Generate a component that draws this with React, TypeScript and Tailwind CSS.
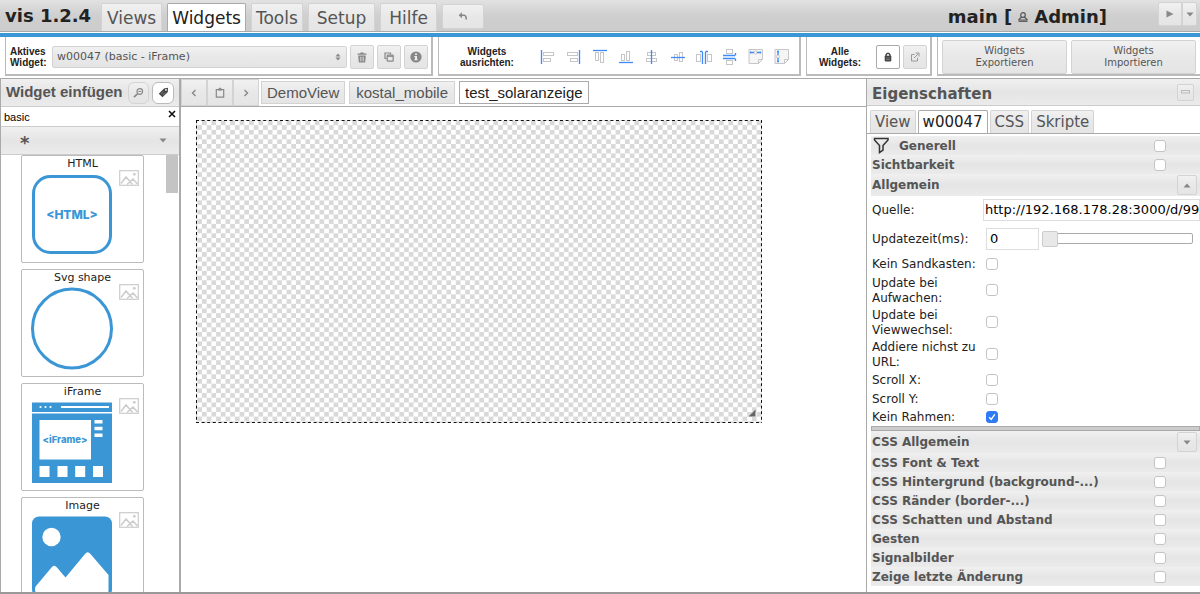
import type { ReactNode } from "react";

const glass =
  "border border-[#d3d3d3] bg-linear-to-b from-[#f1f1f1] via-[#e8e8e8] to-[#e5e5e5] text-[#555]";
const bar = "bg-linear-to-b from-[#f0f0f0] via-[#e5e5e5] to-[#ebebeb]";

function IconButton({
  label,
  className,
  children,
}: {
  label: string;
  className: string;
  children: ReactNode;
}) {
  return (
    <button
      type="button"
      aria-label={label}
      className={`flex shrink-0 items-center justify-center ${className}`}
    >
      {children}
    </button>
  );
}

function Caret({ up = false }: { up?: boolean }) {
  return (
    <svg width="8" height="5" viewBox="0 0 8 5" fill="#888">
      <path d={up ? "M0.5 4.5 L4 0.5 L7.5 4.5Z" : "M0.5 0.5 L4 4.5 L7.5 0.5Z"} />
    </svg>
  );
}

function Check({ id, checked = false }: { id: string; checked?: boolean }) {
  return (
    <span className="grid size-3 shrink-0 place-items-center">
      <input
        id={id}
        type="checkbox"
        defaultChecked={checked}
        className="peer col-start-1 row-start-1 size-3 appearance-none rounded-[3px] border border-[#c4c4c4] bg-white checked:border-[#2f7bf6] checked:bg-[#2f7bf6]"
      />
      <svg
        width="10"
        height="10"
        viewBox="0 0 10 10"
        className="pointer-events-none invisible col-start-1 row-start-1 peer-checked:visible"
        fill="none"
        stroke="#fff"
        strokeWidth="1.4"
      >
        <path d="M2.2 5.3 L4.2 7.5 L7.8 2.3" />
      </svg>
    </span>
  );
}

/* ---------- header ---------- */

function Header() {
  const tab = "rounded-t-xs border-b-0 pt-0.5 text-[17px] leading-[25px]";
  return (
    <header className="flex h-8 items-end border-b border-[#aaa] bg-linear-to-b from-[#e2e2e2] via-[#cfcfcf] to-[#cccccc] pl-[5px] pr-[3px]">
      <h1 className="w-24 self-center text-[18px] leading-8 font-bold text-[#222]">vis 1.2.4</h1>
      <nav className="flex items-end gap-[5px]">
        <a href="#views" className={`${tab} px-[5px] ${glass}`}>
          Views
        </a>
        <a
          href="#widgets"
          className={`${tab} border border-[#aaa] bg-white px-1 text-[#212121]`}
        >
          Widgets
        </a>
        <a href="#tools" className={`${tab} px-1 ${glass}`}>
          Tools
        </a>
        <button type="button" className={`${tab} px-2 ${glass}`}>
          Setup
        </button>
        <button type="button" className={`${tab} px-2 ${glass}`}>
          Hilfe
        </button>
        <IconButton label="Undo" className={`mb-0.5 h-[25px] w-[42px] rounded-xs ${glass}`}>
          <svg width="10" height="9" viewBox="0 0 10 9" fill="none" stroke="#888" strokeWidth="1.6">
            <path d="M2 3.3 H6.2 Q8.3 3.5 8.2 7.5" />
            <path d="M4 0.3 L0.6 3.3 L4 6.3Z" fill="#888" stroke="none" />
          </svg>
        </IconButton>
      </nav>
      <div className="ml-auto flex items-center self-center pt-0.5 text-[18px] leading-8 font-bold text-[#222]">
        <span>main [</span>
        <svg width="10" height="10" viewBox="0 0 10 10" className="mx-1.5" fill="none" stroke="#555" strokeWidth="1.2">
          <circle cx="5" cy="3" r="2.3" />
          <path d="M3.8 5 L1 7.2 V8 H9 V7.2 L6.2 5" />
          <path d="M0.5 9.3 H9.5" />
        </svg>
        <span>Admin]</span>
      </div>
      <div className="ml-[51px] flex self-start pt-0.5">
        <IconButton label="Run view" className={`h-6 w-6 rounded-l-xs ${glass}`}>
          <svg width="8" height="8" viewBox="0 0 8 8" fill="#888">
            <path d="M0.5 0.5 L7.5 4 L0.5 7.5Z" />
          </svg>
        </IconButton>
        <IconButton label="Run options" className={`h-6 w-[15px] rounded-r-xs ${glass}`}>
          <Caret />
        </IconButton>
      </div>
    </header>
  );
}

/* ---------- toolbar ---------- */

const alignIcons: { label: string; lines: string; boxes: ReactNode }[] = [
  {
    label: "Align left",
    lines: "M2.5 2 V16",
    boxes: (<><rect x="4.5" y="4.5" width="10" height="3" /><rect x="4.5" y="10.5" width="7" height="3" /></>),
  },
  {
    label: "Align right",
    lines: "M14.5 2 V16",
    boxes: (<><rect x="2.5" y="4.5" width="10" height="3" /><rect x="5.5" y="10.5" width="7" height="3" /></>),
  },
  {
    label: "Align top",
    lines: "M2 2.5 H16",
    boxes: (<><rect x="4.5" y="4.5" width="3" height="8" /><rect x="9.5" y="4.5" width="3" height="10" /></>),
  },
  {
    label: "Align bottom",
    lines: "M2 14.5 H16",
    boxes: (<><rect x="4.5" y="6.5" width="3" height="6" /><rect x="9.5" y="3.5" width="3" height="9" /></>),
  },
  {
    label: "Centre horizontally",
    lines: "M8.5 2 V16",
    boxes: (<><rect x="4.5" y="4.5" width="8" height="3" /><rect x="3.5" y="10.5" width="10" height="3" /></>),
  },
  {
    label: "Centre vertically",
    lines: "M2 9.5 H16",
    boxes: (<><rect x="5.5" y="6.5" width="3" height="6" /><rect x="10.5" y="4.5" width="3" height="9" /></>),
  },
  {
    label: "Distribute horizontally",
    lines: "M7.5 4 V16 M10.5 4 V16 M5 3.5 H7.5 M10.5 3.5 H13",
    boxes: (<><rect x="1.5" y="6.5" width="4" height="7" /><rect x="12.5" y="6.5" width="4" height="7" /></>),
  },
  {
    label: "Distribute vertically",
    lines: "M2 7.5 H14 M2 10.5 H14 M14.5 5 V7.5 M14.5 10.5 V13",
    boxes: (<><rect x="5.5" y="1.5" width="6" height="4" /><rect x="5.5" y="12.5" width="6" height="4" /></>),
  },
  {
    label: "Same width",
    lines: "M3 4.5 H7 M10 4.5 H14 M3.500 3.500 V5.500 M13.500 3.500 V5.500",
    boxes: (<><path d="M2 1.5 H15.5 V11.5 L11.5 15.5 H2Z M11.5 15.5 V11.5 H15.5" fill="#f5f5f5" /><circle cx="8.5" cy="4.5" r="1.5" /></>),
  },
  {
    label: "Same height",
    lines: "M5 3 V7 M5 10 V14 M4 3.500 H6 M4 13.500 H6",
    boxes: (<><path d="M2 1.5 H15.5 V11.5 L11.5 15.5 H2Z M11.5 15.5 V11.5 H15.5" fill="#f5f5f5" /><circle cx="5" cy="8.5" r="1.5" /></>),
  },
];

const group = "flex h-[39px] items-center border-r-2 border-b-2 border-l border-[#bbb] bg-white pt-[3px]";

function Toolbar() {
  return (
    <div className="flex h-[42px] items-start gap-[5px] border-b border-[#aaa] pl-[5px]">
      <section className={`${group} shrink-0 gap-[3px] pr-[3px] pl-1`}>
        <label
          htmlFor="active-widget"
          className="w-[39px] font-['Liberation_Sans',Arial,sans-serif] text-[10px] leading-[11px] font-bold text-[#222]"
        >
          Aktives Widget:
        </label>
        <span className="relative">
          <select
            id="active-widget"
            className={`block h-[22px] w-[295px] appearance-none rounded-xs pl-1 text-[11px] ${glass}`}
          >
            <option>w00047 (basic - iFrame)</option>
          </select>
          <svg width="6" height="8" viewBox="0 0 6 8" className="pointer-events-none absolute top-[7px] right-[6px]" fill="#888">
            <path d="M0.5 3.4 L3 0.5 L5.5 3.4Z M0.5 4.6 L3 7.5 L5.5 4.6Z" />
          </svg>
        </span>
        <IconButton label="Delete widget" className={`size-6 rounded-xs ${glass}`}>
          <svg width="10" height="11" viewBox="0 0 10 11" fill="#888">
            <path d="M0.5 1.5 H3.3 V0.5 H6.7 V1.5 H9.5 V2.8 H0.5Z" />
            <path fillRule="evenodd" d="M1.2 3.5 H8.8 L8.2 10.5 H1.8Z M3 4.8 V9.3 H3.6 V4.8Z M4.7 4.8 V9.3 H5.3 V4.8Z M6.4 4.8 V9.3 H7 V4.8Z" />
          </svg>
        </IconButton>
        <IconButton label="Copy widget" className={`size-6 rounded-xs ${glass}`}>
          <svg width="10" height="10" viewBox="0 0 10 10" fill="none" stroke="#888" strokeWidth="1.2">
            <path d="M2.5 6.5 H1 V1 H6.5 V2.5" />
            <rect x="3.2" y="3.2" width="6" height="6" rx="0.8" />
            <path d="M3.5 4.3 H9" />
          </svg>
        </IconButton>
        <IconButton label="Widget info" className={`size-6 rounded-xs ${glass}`}>
          <svg width="12" height="12" viewBox="0 0 12 12">
            <circle cx="6" cy="6" r="5.6" fill="#888" />
            <path d="M5 2.4 H7 V4.1 H5Z M4.3 5 H7 V8.3 H7.7 V9.3 H4.3 V8.3 H5 V6 H4.3Z" fill="#eee" />
          </svg>
        </IconButton>
      </section>

      <section className={`${group} shrink-0 pr-1`}>
        <p className="w-[96px] text-center font-['Liberation_Sans',Arial,sans-serif] text-[10px] leading-[11px] font-bold text-[#222]">
          Widgets
          <br />
          ausrichten:
        </p>
        {alignIcons.map((icon) => (
          <IconButton key={icon.label} label={icon.label} className="h-6 w-[26px]">
            <svg width="18" height="18" viewBox="0 0 18 18" fill="none" strokeWidth="1">
              <g stroke="#c6c6c6">{icon.boxes}</g>
              <path d={icon.lines} stroke="#3d8bfa" strokeWidth="1.3" />
            </svg>
          </IconButton>
        ))}
      </section>

      <section className={`${group} shrink-0 gap-[3px] pr-[3px]`}>
        <p className="w-[66px] text-center font-['Liberation_Sans',Arial,sans-serif] text-[10px] leading-[11px] font-bold text-[#222]">
          Alle
          <br />
          Widgets:
        </p>
        <IconButton label="Lock all widgets" className="size-6 rounded-xs border border-[#aaa] bg-white">
          <svg width="8" height="10" viewBox="0 0 8 10">
            <path d="M2 4.5 V2.8 Q4 -0.4 6 2.8 V4.5" fill="none" stroke="#444" strokeWidth="1.5" />
            <rect x="0.7" y="3.8" width="6.6" height="5.6" rx="0.8" fill="#444" />
            <path d="M2 6 H6 M2 7.6 H6" stroke="#999" strokeWidth="0.6" />
          </svg>
        </IconButton>
        <IconButton label="Open all widgets" className={`size-6 rounded-xs ${glass}`}>
          <svg width="10" height="10" viewBox="0 0 10 10" fill="none" stroke="#999" strokeWidth="1">
            <path d="M4.5 2.5 H1.5 V9 H7.5 V5.8" />
            <path d="M4 6 L8 2 M5.5 1 H9 V4.5" />
          </svg>
        </IconButton>
      </section>

      <section className="flex h-[39px] min-w-0 flex-1 items-center gap-1 border-b-2 border-l border-[#bbb] bg-white px-1 pt-0.5">
        <button type="button" className={`h-[34px] flex-1 rounded-xs text-[10px] leading-3 ${glass}`}>
          Widgets
          <br />
          Exportieren
        </button>
        <button type="button" className={`h-[34px] flex-1 rounded-xs text-[10px] leading-3 ${glass}`}>
          Widgets
          <br />
          Importieren
        </button>
      </section>
    </div>
  );
}

/* ---------- widget palette ---------- */

const blue = "#3a96d5";

function Placeholder() {
  return (
    <svg width="20" height="16" viewBox="0 0 20 16" className="shrink-0" fill="none" stroke="#ccc" strokeWidth="1.2">
      <rect x="0.7" y="0.7" width="18.6" height="14.6" />
      <path d="M2 13.5 L7 7 L11 11.5 M8 14.5 L14 9 L18.5 14 M11 11.5 L13.5 14.5" strokeWidth="1.5" />
      <circle cx="15.3" cy="4.3" r="1.4" fill="#ccc" stroke="none" />
    </svg>
  );
}

const palette: { title: string; art: ReactNode }[] = [
  {
    title: "HTML",
    art: (
      <>
        <rect x="2.5" y="3.5" width="77" height="76" rx="17" fill="none" stroke={blue} strokeWidth="3" />
        <text x="41" y="45.5" textAnchor="middle" fontSize="12" fontWeight="800" fontFamily="Inter, sans-serif" fill={blue}>
          &lt;HTML&gt;
        </text>
      </>
    ),
  },
  {
    title: "Svg shape",
    art: <circle cx="41" cy="41.500" r="39.5" fill="none" stroke={blue} strokeWidth="3" />,
  },
  {
    title: "iFrame",
    art: (
      <>
        <path d="M1 1.5 H81 V11 H1Z M1 12.5 H81 V82 H1Z" fill={blue} />
        <path
          d="M30 5 H78 V7 H30Z M8.5 19 H60 V58.5 H8.5Z M63.5 19 H71.5 V22.5 H63.5Z M63.5 25.7 H71.5 V29.2 H63.5Z M63.5 32.5 H71.5 V36 H63.5Z M8.5 65 H18.5 V76 H8.5Z M26.5 65 H36.5 V76 H26.5Z M44.2 65 H54.2 V76 H44.2Z M62 65 H72 V76 H62Z"
          fill="#fff"
        />
        <g fill="#fff">
          <circle cx="9.5" cy="6" r="1.1" />
          <circle cx="14.5" cy="6" r="1.1" />
          <circle cx="19.5" cy="6" r="1.1" />
        </g>
        <text x="34" y="42" textAnchor="middle" fontSize="9.5" fontWeight="800" fontFamily="Inter, sans-serif" fill={blue}>
          &lt;iFrame&gt;
        </text>
      </>
    ),
  },
  {
    title: "Image",
    art: (
      <>
        <rect x="1" y="1.5" width="80" height="80" rx="7" fill={blue} />
        <circle cx="20.5" cy="22" r="9.2" fill="#fff" />
        <path
          d="M4 74 Q4 72 5 71 L20.5 52.5 Q23 49 26 52.5 L34.5 62.5 L54 39 Q56.5 35.5 59.5 39 L77.5 60 V76 Q77.5 79 74.5 79 H8 Q4 79 4 74Z"
          fill="#fff"
        />
      </>
    ),
  },
];

function Palette() {
  return (
    <aside className="flex w-[181px] shrink-0 flex-col border-r-2 border-l border-r-[#aaa] border-l-[#aaa] bg-white">
      <div className={`flex h-7 shrink-0 items-center gap-[3px] border-b border-[#ccc] pr-[5px] pl-[5px] ${bar}`}>
        <h2 className="flex-1 whitespace-nowrap font-['Liberation_Sans',Arial,sans-serif] text-[15px] font-bold text-[#555]">
          Widget einfügen
        </h2>
        <IconButton label="Search widgets" className={`h-[22px] w-[21px] rounded-md ${glass}`}>
          <svg width="11" height="10" viewBox="0 0 11 10" fill="none" stroke="#888" strokeWidth="1.2">
            <circle cx="6.8" cy="3.5" r="2.8" />
            <path d="M4.8 5.5 L1 9.2" strokeWidth="1.7" />
            <path d="M5.5 3.5 H8.2" strokeWidth="1" />
          </svg>
        </IconButton>
        <IconButton label="Filter by tag" className="h-[22px] w-[22px] rounded-md border border-[#bbb] bg-white">
          <svg width="11" height="11" viewBox="0 0 11 11">
            <path d="M0.8 6.8 L6 1.4 L10 0.8 L9.8 5 L4.5 10.3Z" fill="#444" />
            <circle cx="8" cy="2.9" r="0.9" fill="#fff" />
            <path d="M3 6.8 L5.5 4.3 M4.5 8.2 L7 5.7" stroke="#aaa" strokeWidth="0.6" />
          </svg>
        </IconButton>
      </div>
      <div className="flex h-[19px] shrink-0 items-center pr-[3px] font-['Liberation_Sans',Arial,sans-serif]">
        <input
          type="text"
          aria-label="Filter"
          defaultValue="basic"
          className="min-w-0 flex-1 pl-[3px] text-[11px] leading-4 text-black outline-none"
        />
        <IconButton label="Clear filter" className="mb-1.5 size-2">
          <svg width="8" height="8" viewBox="0 0 8 8" stroke="#111" strokeWidth="1.6">
            <path d="M1 1 L7 7 M7 1 L1 7" />
          </svg>
        </IconButton>
      </div>
      <button
        type="button"
        className={`flex h-[29px] shrink-0 items-center justify-between border-y border-[#ccc] pr-3 pl-[19px] text-[18px] leading-5 font-bold text-[#555] ${bar}`}
      >
        <span className="pt-1">*</span>
        <Caret />
      </button>
      <div className="flex min-h-0 flex-1 justify-between overflow-hidden pl-5">
        <ul className="flex w-[123px] flex-col gap-1.5">
          {palette.map((item) => (
            <li key={item.title} className="h-[108px] w-full shrink-0 rounded-xs border border-[#bbb] bg-white">
              <p className="pt-px text-center text-[11px] leading-[13px] text-[#222]">{item.title}</p>
              <div className="flex items-start gap-1.5 pl-[9px]">
                <svg width="82" height="84" viewBox="0 0 82 84" className="mt-[3px] shrink-0">
                  {item.art}
                </svg>
                <Placeholder />
              </div>
            </li>
          ))}
        </ul>
        <div className="mr-px h-[38px] w-3 shrink-0 bg-[#c4c4c4]" />
      </div>
    </aside>
  );
}

/* ---------- view editor ---------- */

function Editor() {
  return (
    <main className="flex min-w-0 flex-1 flex-col bg-white">
      <div className="flex h-7 shrink-0 items-center border-b border-[#aaa] font-['Liberation_Sans',Arial,sans-serif] text-[15px]">
        <IconButton label="Previous view" className={`h-[27px] w-[26px] ${glass}`}>
          <svg width="6" height="8" viewBox="0 0 6 8" fill="none" stroke="#888" strokeWidth="1.4">
            <path d="M4.5 1 L1.5 4 L4.5 7" />
          </svg>
        </IconButton>
        <IconButton label="View list" className={`h-[27px] w-[26px] ${glass}`}>
          <svg width="10" height="11" viewBox="0 0 10 11" fill="none" stroke="#888" strokeWidth="1.2">
            <path d="M3 2.5 H1.3 V10.2 H8.7 V2.5 H7" />
            <path d="M3 3.3 V2 H4 Q5 -0.5 6 2 H7 V3.3Z" fill="#888" strokeWidth="0.6" />
          </svg>
        </IconButton>
        <IconButton label="Next view" className={`h-[27px] w-[26px] ${glass}`}>
          <svg width="6" height="8" viewBox="0 0 6 8" fill="none" stroke="#888" strokeWidth="1.4">
            <path d="M1.5 1 L4.5 4 L1.5 7" />
          </svg>
        </IconButton>
        <nav className="ml-0.5 flex gap-1">
          <a href="#DemoView" className={`px-[5px] leading-[21px] ${glass}`}>
            DemoView
          </a>
          <a href="#kostal_mobile" className={`px-1.5 leading-[21px] ${glass}`}>
            kostal_mobile
          </a>
          <a href="#test_solaranzeige" className="border border-[#aaa] bg-white px-[5px] leading-[21px] text-[#212121]">
            test_solaranzeige
          </a>
        </nav>
      </div>
      <div className="flex-1 pt-[13px] pl-[15px]">
        <div className="relative h-[303px] w-[566px] max-w-full">
          <svg width="100%" height="100%" className="block">
            <defs>
              <pattern id="checker" x="1.3" y="0.5" width="9.4" height="9.4" patternUnits="userSpaceOnUse">
                <rect width="9.4" height="9.4" fill="#fff" />
                <path d="M4.7 0 H9.4 V4.7 H4.7Z M0 4.7 H4.7 V9.4 H0Z" fill="#d9d9d9" />
              </pattern>
            </defs>
            <rect width="100%" height="100%" fill="url(#checker)" />
            <g stroke="#111" strokeDasharray="3 2.6">
              <line x1="0" y1="0.5" x2="100%" y2="0.5" />
              <line x1="0" y1="302.5" x2="100%" y2="302.5" />
              <line x1="0.5" y1="0" x2="0.5" y2="100%" />
              <line x1="565.5" y1="0" x2="565.5" y2="100%" />
            </g>
          </svg>
          <svg width="8" height="8" viewBox="0 0 8 8" className="absolute right-1.5 bottom-1.5">
            <path d="M7.5 0.5 V7.5 H0.5Z" fill="#666" />
          </svg>
        </div>
      </div>
    </main>
  );
}

/* ---------- properties ---------- */

function Section({ title, height = "h-[19px]", control, icon }: { title: string; height?: string; control?: ReactNode; icon?: ReactNode }) {
  const id = `section-${title}`;
  return (
    <div className={`flex shrink-0 items-center ${height} ${bar} pl-px`}>
      {icon}
      {control ? (
        <h3 className="flex-1 text-[12px] font-bold text-[#555]">{title}</h3>
      ) : (
        <label htmlFor={id} className="flex-1 text-[12px] font-bold text-[#555]">
          {title}
        </label>
      )}
      {control ?? (
        <span className="mr-[34px] flex">
          <Check id={id} />
        </span>
      )}
    </div>
  );
}

function CheckRow({ id, label, height, checked }: { id: string; label: string; height: string; checked?: boolean }) {
  return (
    <div className={`flex shrink-0 items-center pl-px ${height}`}>
      <label htmlFor={id} className="w-[114px] pt-px pr-1 text-[12px] leading-[15px] text-[#222]">
        {label}
      </label>
      <Check id={id} checked={checked} />
    </div>
  );
}

const cssSections = [
  "CSS Font & Text",
  "CSS Hintergrund (background-...)",
  "CSS Ränder (border-...)",
  "CSS Schatten und Abstand",
  "Gesten",
  "Signalbilder",
  "Zeige letzte Änderung",
];

function Properties() {
  const tab = "rounded-t-xs border-b-0 px-1 text-[15px] leading-[22px]";
  return (
    <aside className="flex w-[334px] shrink-0 flex-col border-l border-[#aaa] bg-white">
      <div className={`flex h-[27px] shrink-0 items-center justify-between border-b border-[#ccc] pr-1.5 pl-[5px] ${bar}`}>
        <h2 className="pt-1 text-[15px] leading-5 font-bold text-[#555]">Eigenschaften</h2>
        <IconButton label="Collapse properties" className={`size-[17px] rounded-xs ${glass}`}>
          <svg width="9" height="4" viewBox="0 0 9 4" fill="none" stroke="#bbb">
            <rect x="0.5" y="0.5" width="8" height="2.5" />
          </svg>
        </IconButton>
      </div>
      <nav className="flex h-7 shrink-0 items-end gap-0.5 border-b border-[#aaa] pl-[3px]">
        <a href="#view" className={`${tab} ${glass}`}>
          View
        </a>
        <a href="#w00047" className={`${tab} border border-[#aaa] bg-white text-[#212121]`}>
          w00047
        </a>
        <a href="#css" className={`${tab} ${glass}`}>
          CSS
        </a>
        <a href="#scripts" className={`${tab} ${glass}`}>
          Skripte
        </a>
      </nav>
      <div className="flex min-h-0 flex-1 flex-col overflow-hidden pt-0.5 pl-1">
        <Section
          title="Generell"
          icon={
            <svg width="18" height="17" viewBox="0 0 18 17" className="mr-[9px]" fill="none" stroke="#333" strokeWidth="1.5">
              <path d="M2.5 1.5 H16 V3 L11 8.5 V13 L7.5 15.5 V8.5 L2.5 3Z" />
            </svg>
          }
        />
        <Section title="Sichtbarkeit" />
        <Section
          title="Allgemein"
          height="h-[22px]"
          control={
            <IconButton label="Collapse group" className={`mr-[3px] size-5 rounded-xs ${glass}`}>
              <Caret up />
            </IconButton>
          }
        />
        <div className="flex h-[27px] shrink-0 items-center pl-px">
          <label htmlFor="source" className="w-[111px] text-[12px] text-[#222]">
            Quelle:
          </label>
          <input
            id="source"
            type="text"
            defaultValue="http://192.168.178.28:3000/d/99"
            className="h-[22px] min-w-0 flex-1 border border-[#ddd] pl-px text-[13px] text-black"
          />
        </div>
        <div className="flex h-[31px] shrink-0 items-center pl-px">
          <label htmlFor="interval" className="w-[114px] text-[12px] text-[#222]">
            Updatezeit(ms):
          </label>
          <input id="interval" type="text" defaultValue="0" className="h-[22px] w-[53px] border border-[#ddd] pl-[3px] text-[13px] text-black" />
          <input
            type="range"
            aria-label="Updatezeit(ms)"
            defaultValue="0"
            className="mr-[7px] ml-[3px] h-[11px] min-w-0 flex-1 appearance-none rounded-xs border border-[#aaa] bg-white [&::-webkit-slider-thumb]:-ml-px [&::-webkit-slider-thumb]:size-4 [&::-webkit-slider-thumb]:appearance-none [&::-webkit-slider-thumb]:rounded-xs [&::-webkit-slider-thumb]:border [&::-webkit-slider-thumb]:border-[#ccc] [&::-webkit-slider-thumb]:bg-[#e8e8e8]"
          />
        </div>
        <CheckRow id="sandbox" label="Kein Sandkasten:" height="h-5" />
        <CheckRow id="wake" label="Update bei Aufwachen:" height="h-8" />
        <CheckRow id="viewchange" label="Update bei Viewwechsel:" height="h-8" />
        <CheckRow id="nourl" label="Addiere nichst zu URL:" height="h-8" />
        <CheckRow id="scrollx" label="Scroll X:" height="h-[19px]" />
        <CheckRow id="scrolly" label="Scroll Y:" height="h-[19px]" />
        <CheckRow id="noframe" label="Kein Rahmen:" height="h-[18px]" checked />
        <hr className="h-[5px] shrink-0 border border-[#aaa] bg-[#ccc]" />
        <Section
          title="CSS Allgemein"
          height="h-[22px]"
          control={
            <IconButton label="Expand group" className={`mr-[3px] size-5 rounded-xs ${glass}`}>
              <Caret />
            </IconButton>
          }
        />
        {cssSections.map((title) => (
          <Section key={title} title={title} />
        ))}
      </div>
    </aside>
  );
}

export default function App() {
  return (
    <div className="flex h-screen flex-col overflow-hidden bg-white font-['DejaVu_Sans',Verdana,sans-serif]">
      <Header />
      <div className="mt-px h-1 shrink-0 bg-[#3a96d5]" />
      <Toolbar />
      <div className="flex min-h-0 flex-1 border-b-2 border-[#999]">
        <Palette />
        <Editor />
        <Properties />
      </div>
    </div>
  );
}
